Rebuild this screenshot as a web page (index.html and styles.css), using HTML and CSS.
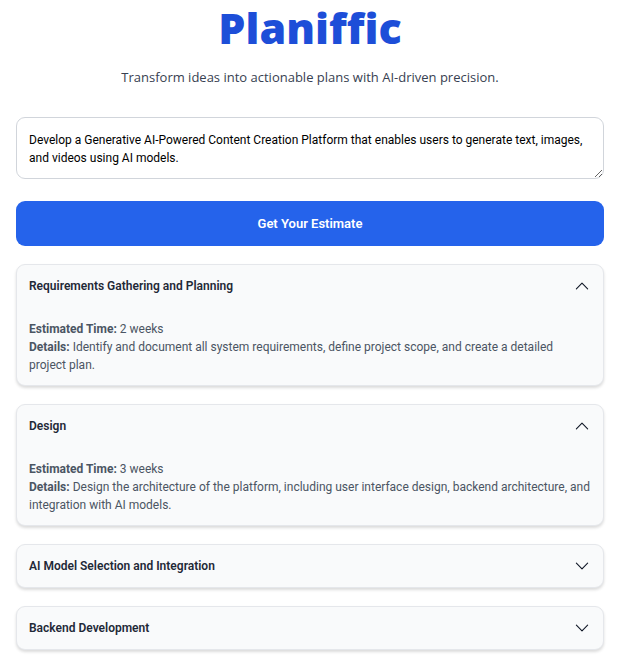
FILE: index.html
```html
<!DOCTYPE html>
<html lang="en">
<head>
    <meta charset="UTF-8">
    <meta name="viewport" content="width=device-width, initial-scale=1.0">
    <title>Planiffic</title>
    <link rel="stylesheet" href="styles.css">
</head>
<body>
<main class="container">
    <header class="hero">
        <h1>Planiffic</h1>
        <p>Transform ideas into actionable plans with AI-driven precision.</p>
    </header>

    <form class="estimate-form">
        <textarea class="idea" rows="2" aria-label="Project idea">Develop a Generative AI-Powered Content Creation Platform that enables users to generate text, images, and videos using AI models.</textarea>
        <button class="submit" type="button">Get Your Estimate</button>
    </form>

    <section class="plan">
        <details class="step" open>
            <summary>
                <span>Requirements Gathering and Planning</span>
                <svg class="chevron" viewBox="0 0 24 24"><path d="M4.5 15.75l7.5-7.5 7.5 7.5"/></svg>
            </summary>
            <div class="step-body">
                <p><strong>Estimated Time:</strong> 2 weeks</p>
                <p><strong>Details:</strong> Identify and document all system requirements, define project scope, and create a detailed project plan.</p>
            </div>
        </details>

        <details class="step" open>
            <summary>
                <span>Design</span>
                <svg class="chevron" viewBox="0 0 24 24"><path d="M4.5 15.75l7.5-7.5 7.5 7.5"/></svg>
            </summary>
            <div class="step-body">
                <p><strong>Estimated Time:</strong> 3 weeks</p>
                <p><strong>Details:</strong> Design the architecture of the platform, including user interface design, backend architecture, and integration with AI models.</p>
            </div>
        </details>

        <details class="step">
            <summary>
                <span>AI Model Selection and Integration</span>
                <svg class="chevron" viewBox="0 0 24 24"><path d="M4.5 15.75l7.5-7.5 7.5 7.5"/></svg>
            </summary>
        </details>

        <details class="step">
            <summary>
                <span>Backend Development</span>
                <svg class="chevron" viewBox="0 0 24 24"><path d="M4.5 15.75l7.5-7.5 7.5 7.5"/></svg>
            </summary>
        </details>
    </section>
</main>
</body>
</html>
```
FILE: styles.css
```css
* {
    box-sizing: border-box;
}

body {
    margin: 0;
    background: #fff;
    color: #1f2937;
    font-family: "Segoe UI", Roboto, "Noto Sans", sans-serif;
    font-size: 12px;
    line-height: 18px;
}

h1, p {
    margin: 0;
}

.container {
    max-width: 800px;
    margin: 0 auto;
    padding: 0 17px 6px 16px;
}

.hero {
    text-align: center;
    margin-bottom: 29px;
    font-family: "Segoe UI", "Open Sans", sans-serif;
}

.hero h1 {
    color: #1d4ed8;
    font-family: "Segoe UI", "Noto Sans", sans-serif;
    font-size: 43px;
    font-weight: 900;
    line-height: 56px;
    margin-bottom: 11px;
}

.hero p {
    color: #374151;
    font-size: 13px;
    line-height: 21px;
}

.estimate-form {
    display: flex;
    flex-direction: column;
    gap: 22px;
    margin-bottom: 18px;
}

.idea {
    display: block;
    width: 100%;
    height: 62px;
    padding: 13px 12px 11px;
    border: 1px solid #d1d5db;
    border-radius: 9px;
    background: #fff;
    color: #000;
    font: inherit;
    resize: vertical;
}

.submit {
    padding: 12px;
    border: none;
    border-radius: 9px;
    background: #2563eb;
    color: #fff;
    font: inherit;
    font-size: 13px;
    font-weight: 600;
    line-height: 21px;
    cursor: pointer;
}

.plan {
    display: flex;
    flex-direction: column;
    gap: 18px;
}

.step {
    border: 1px solid #e5e7eb;
    border-radius: 9px;
    background: #f9fafb;
    box-shadow: 0 2px 3px rgba(0, 0, 0, 0.14);
}

.step summary {
    display: flex;
    justify-content: space-between;
    align-items: center;
    padding: 12px;
    font-weight: 600;
    list-style: none;
    cursor: pointer;
}

.chevron {
    width: 18px;
    height: 18px;
    fill: none;
    stroke: #111827;
    stroke-width: 1.5;
    stroke-linecap: round;
    stroke-linejoin: round;
    transform: rotate(180deg);
}

.step[open] .chevron {
    transform: none;
}

.step-body {
    padding: 13px 12px 11px;
    color: #4b5563;
}
```
